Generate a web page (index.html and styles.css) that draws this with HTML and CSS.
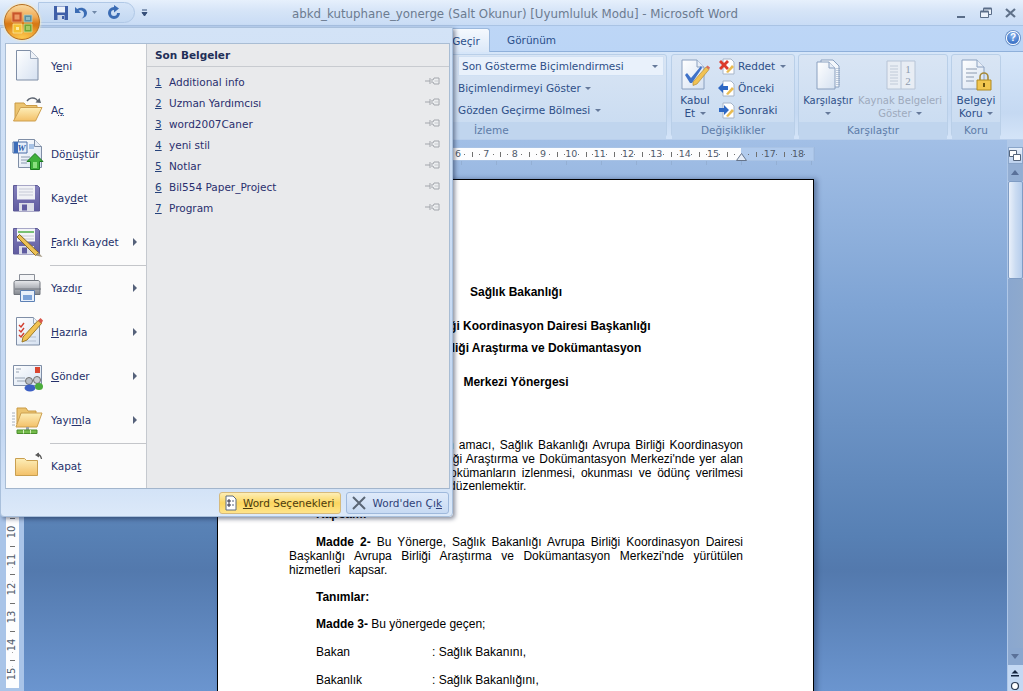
FILE: index.html
```html
<!DOCTYPE html>
<html lang="tr">
<head>
<meta charset="utf-8">
<title>abkd_kutuphane_yonerge - Microsoft Word</title>
<link rel="stylesheet" href="styles.css">
</head>
<body>
<svg class="defs" aria-hidden="true">
  <defs>
    <linearGradient id="paper" x1="0" y1="0" x2="1" y2="1"><stop offset="0" stop-color="#fff"/><stop offset="1" stop-color="#d5e1f1"/></linearGradient>
    <linearGradient id="folder" x1="0" y1="0" x2="0" y2="1"><stop offset="0" stop-color="#fdeeb8"/><stop offset="1" stop-color="#f3c068"/></linearGradient>
    <linearGradient id="disk" x1="0" y1="0" x2="0" y2="1"><stop offset="0" stop-color="#8480bb"/><stop offset="1" stop-color="#5f5ba0"/></linearGradient>
    <linearGradient id="printer" x1="0" y1="0" x2="0" y2="1"><stop offset="0" stop-color="#e8e9ec"/><stop offset=".5" stop-color="#b3b6bc"/><stop offset="1" stop-color="#83878e"/></linearGradient>
    <symbol id="pin" viewBox="0 0 16 8"><path d="M1 4h5M6 1v6" stroke="#a3a6ac" fill="none"/><path d="M7 3h2l1-2h5v6h-5l-1-2H7" fill="#eceef0" stroke="#a3a6ac"/><path d="M10.500 4h4" stroke="#c8cace"/></symbol>
  </defs>
</svg>
<div class="window">
  <header class="titlebar">
    <div class="qat">
      <svg class="qi" width="16" height="16" viewBox="0 0 16 16"><path d="M1 1h14v14H1z" fill="#3f5fa8"/><path d="M4 1.500h8v6H4z" fill="#eef3fa"/><path d="M4.500 10h7v5h-7z" fill="#c9d6ea"/><path d="M9 11h2v3H9z" fill="#3f5fa8"/></svg>
      <svg class="qi" width="16" height="16" viewBox="0 0 16 16"><path d="M3 2v6h6L6.700 5.800C9 4.600 12 6 12 9c0 2-1 3.500-2.500 4.500C12.500 13 15 11 15 8c0-4.500-5.500-7-9.800-4z" fill="#3b6cb4"/></svg>
      <svg class="qa" width="7" height="5" viewBox="0 0 7 5"><path d="M1 1h5L3.500 4z" fill="#7088a8"/></svg>
      <svg class="qi qr" width="16" height="16" viewBox="0 0 16 16"><path d="M8 2a6 6 0 1 0 6 6h-3a3 3 0 1 1-3-3v2.500L13 3.500 8 0z" fill="#3b6cb4"/></svg>
    </div>
    <svg class="qc" width="7" height="8" viewBox="0 0 7 8"><path d="M1 1h5M1 3.500h5L3.500 7z" stroke="#37507a" fill="#37507a" stroke-width="1"/></svg>
    <div class="title">abkd_kutuphane_yonerge (Salt Okunur) [Uyumluluk Modu] - Microsoft Word</div>
    <div class="winctl">
      <svg width="14" height="12" viewBox="0 0 14 12"><path d="M3 9h8v2H3z" fill="#5a6d88"/></svg>
      <svg width="14" height="12" viewBox="0 0 14 12"><path d="M4.500 1.500h8v6h-8z" fill="#eaf1fa" stroke="#5a6d88"/><path d="M4.500 1.500h8" stroke="#5a6d88" stroke-width="2"/><path d="M1.500 4.500h8v6h-8z" fill="#eaf1fa" stroke="#5a6d88"/><path d="M1.500 4.500h8" stroke="#5a6d88" stroke-width="2"/></svg>
      <svg width="14" height="12" viewBox="0 0 14 12"><path d="M2 2l9 8M11 2l-9 8" stroke="#5f7189" stroke-width="2.200"/></svg>
    </div>
  </header>

  <nav class="tabs">
    <div class="tab active">Gözden Geçir</div>
    <div class="tab">Görünüm</div>
    <div class="help">?</div>
  </nav>

  <section class="ribbon">
    <div class="group g-track">
      <div class="group-body track-body">
        <div class="select"><span>Son Gösterme Biçimlendirmesi</span><i class="caret"></i></div>
        <div class="rline">Biçimlendirmeyi Göster <i class="caret"></i></div>
        <div class="rline">Gözden Geçirme Bölmesi <i class="caret"></i></div>
      </div>
      <div class="group-label track-label">İzleme</div>
    </div>
    <div class="group g-changes">
      <div class="group-body changes-body">
        <div class="big big-accept">
          <svg width="32" height="32" viewBox="0 0 32 32"><path d="M3 1h15l7 7v22H3z" fill="url(#paper)" stroke="#8aa0bf"/><path d="M18 1v7h7" fill="#e8eef7" stroke="#8aa0bf"/><path d="M6 16l2-2 4 5L22 7l1 2-10 15h-2z" fill="#3f72c8"/><path d="M14 23L27 8l3 2.500L18 25l-4 1.500z" fill="#f1c253" stroke="#a7832d" stroke-width=".6"/><path d="M27 8l3 2.500 1-2-2.500-2z" fill="#d96c5a"/></svg>
          <span>Kabul<br>Et <i class="caret"></i></span>
        </div>
        <div class="stack">
          <div class="sitem"><svg width="17" height="17" viewBox="0 0 17 17"><path d="M5 1h8l3 3v12H5z" fill="#fff" stroke="#a7b5c8"/><path d="M1 4l2-2 3 3 3-3 2 2-3 3 3 3-2 2-3-3-3 3-2-2 3-3z" fill="#dc3b2b"/><path d="M8 14l6-7 2 2-6 6z" fill="#e9bc52"/></svg><span>Reddet <i class="caret"></i></span></div>
          <div class="sitem"><svg width="17" height="17" viewBox="0 0 17 17"><path d="M5 1h8l3 3v12H5z" fill="#fff" stroke="#a7b5c8"/><path d="M0 8l5-5v3h5v4H5v3z" fill="#2e68c4"/><path d="M8 14l6-7 2 2-6 6z" fill="#e9bc52"/></svg><span>Önceki</span></div>
          <div class="sitem"><svg width="17" height="17" viewBox="0 0 17 17"><path d="M5 1h8l3 3v12H5z" fill="#fff" stroke="#a7b5c8"/><path d="M11 8L6 3v3H1v4h5v3z" fill="#2e68c4"/><path d="M8 14l6-7 2 2-6 6z" fill="#e9bc52"/></svg><span>Sonraki</span></div>
        </div>
      </div>
      <div class="group-label">Değişiklikler</div>
    </div>
    <div class="group g-compare">
      <div class="group-body compare-body">
        <div class="big big-compare">
          <svg width="32" height="32" viewBox="0 0 32 32"><path d="M9 1h12l6 6v21H9z" fill="#f4f7fb" stroke="#8aa0bf"/><path d="M5 3h12l6 6v21H5z" fill="url(#paper)" stroke="#8aa0bf"/><path d="M17 3v6h6" fill="#e8eef7" stroke="#8aa0bf"/><path d="M25 9v17M27 9v17" stroke="#8aa0bf" stroke-dasharray="1 1"/></svg>
          <span>Karşılaştır<br><i class="caret"></i></span>
        </div>
        <div class="big big-source dim">
          <svg width="32" height="32" viewBox="0 0 32 32"><path d="M3 2h28v28H3z" fill="#e8edf4" stroke="#b7c4d6"/><path d="M17 2v28" stroke="#b7c4d6"/><path d="M6 7h8M6 10h8M6 13h8M6 16h8M6 19h8M6 22h8M6 25h8" stroke="#c0cad8"/><text x="24" y="14" class="numglyph">1</text><text x="24" y="26" class="numglyph">2</text></svg>
          <span>Kaynak Belgeleri<br>Göster <i class="caret"></i></span>
        </div>
      </div>
      <div class="group-label">Karşılaştır</div>
    </div>
    <div class="group g-protect">
      <div class="group-body protect-body">
        <div class="big big-protect">
          <svg width="32" height="32" viewBox="0 0 32 32"><path d="M2 1h15l7 7v22H2z" fill="url(#paper)" stroke="#8aa0bf"/><path d="M17 1v7h7" fill="#e8eef7" stroke="#8aa0bf"/><path d="M6 10h11M6 14h11M6 18h8M6 22h8" stroke="#8b9ab0"/><path d="M20 21v-3a4 4 0 0 1 8 0v3" fill="none" stroke="#a68a3a" stroke-width="1.600"/><path d="M17 21h14v10H17z" fill="#f2c64f" stroke="#b08a22"/><path d="M23 24h2v4h-2z" fill="#6b5310"/></svg>
          <span>Belgeyi<br>Koru <i class="caret"></i></span>
        </div>
      </div>
      <div class="group-label">Koru</div>
    </div>
  </section>

  <main class="workspace">
    <aside class="vruler">
      <div class="vcell"><span>1</span></div><div class="vcell"><span>2</span></div><div class="vcell"><span>3</span></div><div class="vcell"><span>4</span></div><div class="vcell"><span>5</span></div><div class="vcell"><span>6</span></div><div class="vcell"><span>7</span></div><div class="vcell"><span>8</span></div><div class="vcell"><span>9</span></div><div class="vcell"><span>10</span></div><div class="vcell"><span>11</span></div><div class="vcell"><span>12</span></div><div class="vcell"><span>13</span></div><div class="vcell"><span>14</span></div><div class="vcell"><span>15</span></div>
    </aside>
    <div class="docarea">
      <div class="hruler">
        <div class="hcell">6</div><div class="hcell">7</div><div class="hcell">8</div><div class="hcell">9</div><div class="hcell">10</div><div class="hcell">11</div><div class="hcell">12</div><div class="hcell">13</div><div class="hcell">14</div><div class="hcell">15</div><div class="hcell hmark"><svg width="11" height="8" viewBox="0 0 11 8"><path d="M5.500 .5l5 7H.5z" fill="#e6edf7" stroke="#66758c"/></svg></div><div class="hcell">17</div><div class="hcell">18</div>
      </div>
      <div class="hticks"></div>
      <article class="page">
        <p class="ctr m-first">Sağlık Bakanlığı</p>
        <p class="ctr m20">Avrupa Birliği Koordinasyon Dairesi Başkanlığı</p>
        <p class="ctr m8">Avrupa Birliği Araştırma ve Dokümantasyon</p>
        <p class="ctr m21">Merkezi Yönergesi</p>
        <p class="ind m21 hd">Amaç:</p>
        <p class="jl m14 ind"><b>Madde 1-</b> Bu yönergenin amacı, Sağlık Bakanlığı Avrupa Birliği Koordinasyon</p>
        <p class="jl">Dairesi Başkanlığı Avrupa Birliği Araştırma ve Dokümantasyon Merkezi'nde yer alan</p>
        <p class="jl">kitap, dergi, bilgi, belge ve dokümanların izlenmesi, okunması ve ödünç verilmesi</p>
        <p>işlemlerinin usul ve esaslarını düzenlemektir.</p>
        <p class="ind m14 hd">Kapsam:</p>
        <p class="jl ind m14"><b>Madde 2-</b> Bu Yönerge, Sağlık Bakanlığı Avrupa Birliği Koordinasyon Dairesi</p>
        <p class="jl">Başkanlığı Avrupa Birliği Araştırma ve Dokümantasyon Merkezi'nde yürütülen</p>
        <p class="wide">hizmetleri kapsar.</p>
        <p class="ind m14 hd">Tanımlar:</p>
        <p class="ind m13"><b>Madde 3-</b> Bu yönergede geçen;</p>
        <p class="def m14"><span>Bakan</span><span>: Sağlık Bakanını,</span></p>
        <p class="def m14"><span>Bakanlık</span><span>: Sağlık Bakanlığını,</span></p>
      </article>
    </div>
    <aside class="scrollbar">
      <div class="sb-split"><svg width="14" height="13" viewBox="0 0 14 13"><path d="M1.500 1.500h7v6h-7z" fill="#fff" stroke="#55657c"/><path d="M5.500 5.500h7v6h-7z" fill="#fff" stroke="#55657c"/></svg></div>
      <div class="sb-arrow"><i class="tri-up"></i></div>
      <div class="sb-thumb"></div>
      <div class="sb-track"></div>
      <div class="sb-arrow sb-down"><i class="tri-down"></i></div>
      <div class="sb-nav">
        <svg width="10" height="8" viewBox="0 0 10 8"><path d="M5 0l3.500 3.500h-7zM1 5h8v1.500H1z" fill="#12233f"/></svg>
        <svg width="10" height="14" viewBox="0 0 10 14"><circle cx="5" cy="6" r="3.500" fill="#fff" stroke="#2b3a52" stroke-width="1.200"/></svg>
      </div>
    </aside>
  </main>
</div>

<button class="orb" aria-label="Office">
  <svg width="24" height="24" viewBox="0 0 24 24"><path d="M1 1h10v10H1z" fill="#c9552b" stroke="#eaa36a" stroke-width=".8"/><path d="M3.500 3.500h5v5h-5z" fill="#ec9a66"/><path d="M13 4h8v7h-8z" fill="#5b8f9e" stroke="#b7d0c4" stroke-width=".8"/><path d="M15 6h4v3h-4z" fill="#8fbcc4"/><path d="M2 13h9v9H2z" fill="#f4bf32" stroke="#fbe6a0" stroke-width=".8"/><path d="M5 16h3v3H5z" fill="#fdeaa0"/><path d="M13 13h8v8h-8z" fill="#72a436" stroke="#cfe39a" stroke-width=".8"/><path d="M15 15h4v4h-4z" fill="#a5cb64"/></svg>
</button>

<div class="menu">
  <div class="menu-top"></div>
  <div class="menu-panel">
    <ul class="cmds">
      <li class="cmd"><svg width="32" height="32" viewBox="0 0 32 32"><path d="M4.500.5h14l7.500 8v21.500H4.500z" fill="url(#paper)" stroke="#7f8ea6"/><path d="M18.500.5v8H26" fill="#eef2f8" stroke="#9aa8bc"/></svg><span>Y<u>e</u>ni</span></li>
      <li class="cmd"><svg width="32" height="32" viewBox="0 0 32 32"><path d="M15 7c2-3 6-4 9-2 1 .7 1.500 1.500 2 2.500" fill="none" stroke="#5c6470" stroke-width="1.400"/><path d="M23.500 8.500l5.500.5-1.500-5z" fill="#5c6470"/><path d="M3 25V9h9l2 2.500h11V15H9z" fill="#ecc470" stroke="#c99a45"/><path d="M8.500 13.500H30L23.500 27H1.500z" fill="url(#folder)" stroke="#cda050"/></svg><span>A<u>ç</u></span></li>
      <li class="cmd"><svg width="32" height="32" viewBox="0 0 32 32"><path d="M6.500 1.500h16l7 7v21h-23z" fill="url(#paper)" stroke="#7f8ea6"/><path d="M22.500 1.500v7h7" fill="#e9eef6" stroke="#7f8ea6"/><path d="M17 6h5v5h-5z" fill="#a8c3e6"/><path d="M1 4h14v11H1z" fill="#e6eef9" stroke="#4a6ea8"/><path d="M2 4h4v11H2z" fill="#3c6cb8"/><text x="9.500" y="13" class="wglyph">W</text><path d="M9 19h9M9 22h8M9 25h6" stroke="#8b9ab0"/><path d="M18.500 31.500v-8H15l8-8 8 8h-3.500v8z" fill="#3eb03b" stroke="#1b7a1f"/><path d="M21 24h4v6h-4z" fill="#8ae07f"/></svg><span>Dö<u>n</u>üştür</span></li>
      <li class="cmd"><svg width="32" height="32" viewBox="0 0 32 32"><path d="M1.500 3.500h24l2 2v23.500h-26z" fill="url(#disk)" stroke="#5d5a96"/><path d="M5 3.500h18v14H5z" fill="#f0f1f6"/><path d="M7 7h14M7 10h14M7 13h14" stroke="#c6c9d6"/><path d="M7 21h15v8H7z" fill="#dcdee8"/><path d="M10 22.500h5v6h-5z" fill="#5f5ba0"/></svg><span>Kay<u>d</u>et</span></li>
      <li class="cmd sub"><svg width="32" height="32" viewBox="0 0 32 32"><path d="M1.500 2.500h24l2 2v23.500h-26z" fill="url(#disk)" stroke="#5d5a96"/><path d="M5 2.500h18v13H5z" fill="#f3f4f8"/><path d="M6 6h16" stroke="#4fb04a" stroke-width="1.500"/><path d="M6 10h16M6 13h16" stroke="#c6c9d6"/><path d="M7 20h15v8H7z" fill="#dcdee8"/><path d="M10 21.500h5v6h-5z" fill="#5f5ba0"/><path d="M5 11l2.500-2.500 19 18-3 3z" fill="#edc155" stroke="#876a22"/><path d="M23.500 29.500l3-3 4 4.500z" fill="#a59a84"/></svg><span><u>F</u>arklı Kaydet</span></li>
      <li class="msep"></li>
      <li class="cmd sub"><svg width="32" height="32" viewBox="0 0 32 32"><path d="M7.500 2.500h15v9h-15z" fill="#f4f5f7" stroke="#8a8f98"/><path d="M2 10.500c0-1 1-2 2-2h22c1 0 2 1 2 2v12H2z" fill="url(#printer)" stroke="#70757d"/><path d="M3 17h26" stroke="#70757d"/><path d="M8.500 18.500h14v11h-14z" fill="#e8f0fb" stroke="#5c80b4"/><path d="M11 23h9v5h-9z" fill="#7ba2d8"/></svg><span>Yazdı<u>r</u></span></li>
      <li class="cmd sub"><svg width="32" height="32" viewBox="0 0 32 32"><path d="M4.500 1.500h17l6 6v21.500h-23z" fill="url(#paper)" stroke="#7f8ea6"/><path d="M21.500 1.500v6h6" fill="#eef2f8" stroke="#9aa8bc"/><path d="M7 9l2 2 3-4M7 14l2 2 3-4M7 19l2 2 3-4" fill="none" stroke="#d23f30" stroke-width="1.400"/><path d="M14 21h10M10 25h14" stroke="#b6c1d1"/><path d="M11 21L26 4.500l3.500 3L15 24l-5 2z" fill="#f1c253" stroke="#9c7a26"/><path d="M26 4.500l3.500 3 1.500-3-2.500-2.500z" fill="#d9584c"/></svg><span><u>H</u>azırla</span></li>
      <li class="cmd sub"><svg width="32" height="32" viewBox="0 0 32 32"><path d="M1.500 5.500h28v20h-28z" fill="url(#paper)" stroke="#7f8ea6"/><path d="M23 7h5v6h-5z" fill="#d9452f"/><path d="M4 9h5M4 12h3M3 18h10M5 21h8" stroke="#98a4b4"/><circle cx="17" cy="21" r="3.500" fill="#b9bec4" stroke="#6e6e6e"/><circle cx="25" cy="20" r="3.500" fill="#c9cdd2" stroke="#6e6e6e"/><ellipse cx="18" cy="28" rx="5.500" ry="3.500" fill="#3c5fc4"/><ellipse cx="27" cy="26.500" rx="4" ry="3.500" fill="#4bac3c"/></svg><span><u>G</u>önder</span></li>
      <li class="cmd sub"><svg width="32" height="32" viewBox="0 0 32 32"><path d="M0 9h3M0 12h3M0 15h3M0 18h3M0 21h3" stroke="#a8b0bc"/><path d="M5 20V4h9l2 3h8v4H9z" fill="#ecc470" stroke="#c99a45"/><path d="M9 9h21l-5 14H4z" fill="url(#folder)" stroke="#cda050"/><path d="M14 23h3v3h-3z" fill="#9aa0a8"/><path d="M5 26h20v3.500H5z" fill="#74bb4b" stroke="#4b8f2c"/><path d="M11.500 26v3.500M18.500 26v3.500" stroke="#d7efc4"/></svg><span>Yayı<u>m</u>la</span></li>
      <li class="msep"></li>
      <li class="cmd"><svg width="32" height="32" viewBox="0 0 32 32"><path d="M25 4c2.500 .5 4 2 4.500 5" fill="none" stroke="#5a5a5a" stroke-width="1.300"/><path d="M23 5l4-2.500 0 5z" fill="#5a5a5a"/><path d="M3.500 8.500h9l2 2h11v15h-22z" fill="url(#folder)" stroke="#c99f50"/></svg><span>Kapa<u>t</u></span></li>
    </ul>
    <section class="recent">
      <h2 class="recent-h">Son Belgeler</h2>
      <ol class="rlist">
        <li><u>1</u><span>Additional info</span><svg class="pin"><use href="#pin"/></svg></li>
        <li><u>2</u><span>Uzman Yardımcısı</span><svg class="pin"><use href="#pin"/></svg></li>
        <li><u>3</u><span>word2007Caner</span><svg class="pin"><use href="#pin"/></svg></li>
        <li><u>4</u><span>yeni stil</span><svg class="pin"><use href="#pin"/></svg></li>
        <li><u>5</u><span>Notlar</span><svg class="pin"><use href="#pin"/></svg></li>
        <li><u>6</u><span>Bil554 Paper_Project</span><svg class="pin"><use href="#pin"/></svg></li>
        <li><u>7</u><span>Program</span><svg class="pin"><use href="#pin"/></svg></li>
      </ol>
    </section>
  </div>
  <div class="menu-foot">
    <button class="fbtn hot"><svg width="14" height="16" viewBox="0 0 14 16"><path d="M2 1h7l3 3v11H2z" fill="#fff" stroke="#5a6a80"/><path d="M4 5h2v2H4zM4 9h2v2H4z" fill="none" stroke="#334"/><path d="M8 6h2M8 10h2" stroke="#55657c"/></svg><span><u>W</u>ord Seçenekleri</span></button>
    <button class="fbtn"><svg width="16" height="14" viewBox="0 0 16 14"><path d="M2 1l12 12M14 1L2 13" stroke="#5a6675" stroke-width="2"/></svg><span class="fquit">Word'den Çı<u>k</u></span></button>
  </div>
</div>
</body>
</html>
```

FILE: styles.css
```css
* { box-sizing: border-box; }
html, body { margin: 0; padding: 0; }
body {
  width: 1023px;
  height: 691px;
  overflow: hidden;
  position: relative;
  font: 10.5px/14px "DejaVu Sans", Tahoma, sans-serif;
  color: #2b4a80;
  background: #bfd5f0;
}
.defs { position: absolute; width: 0; height: 0; }
.window { display: flex; flex-direction: column; height: 691px; }
u { text-underline-offset: 1px; }

/* title bar */
.titlebar {
  height: 26px;
  flex: none;
  display: flex;
  align-items: center;
  background: linear-gradient(#e6f0fc, #d5e4f7 45%, #c9dcf5);
  border-bottom: 1px solid #a9c3e4;
}
.qat {
  margin-left: 38px;
  width: 97px;
  height: 21px;
  border-radius: 0 11px 11px 0;
  background: linear-gradient(#d6e5f8, #c3d8f2);
  border: 1px solid #b0c8e6;
  display: flex;
  align-items: center;
  padding-left: 14px;
  gap: 3px;
}
.qi { flex: none; }
.qa { margin: 0 2px 0 0; }
.qr { margin-left: 3px; }
.qc { margin-left: 6px; }
.title {
  margin-left: 144px;
  padding-top: 2px;
  font-size: 11.8px;
  color: #6c7b90;
  white-space: nowrap;
}
.winctl { margin-left: auto; margin-right: 5px; display: flex; gap: 11px; }

/* tabs */
.tabs {
  height: 26px;
  flex: none;
  display: flex;
  align-items: flex-end;
  padding-left: 412px;
  background: linear-gradient(#bdd6f6, #bbd5f6);
  border-bottom: 1px solid #8fb0da;
  position: relative;
}
.tab { height: 23px; padding: 5px 16px 0; color: #2a4f8a; font-size: 10.5px; }
.tab.active {
  width: 78px;
  padding: 5px 0 0 0;
  text-indent: -4px;
  white-space: nowrap;
  background: linear-gradient(#f5f9fe, #dbe8f8);
  border: 1px solid #9cb9dd;
  border-bottom: 0;
  border-radius: 3px 3px 0 0;
  margin-bottom: -1px;
  height: 24px;
}
.tab + .tab { margin-left: 1px; }
.help {
  position: absolute;
  right: 3px;
  top: 5px;
  width: 14px;
  height: 14px;
  border-radius: 50%;
  background: radial-gradient(circle at 50% 30%, #8bb8f0, #1f59b8);
  border: 1px solid #fff;
  box-shadow: 0 0 0 1px #6d93c8;
  color: #fff;
  font: bold 10px/12px "Liberation Sans", sans-serif;
  text-align: center;
}

/* ribbon */
.ribbon {
  height: 88px;
  flex: none;
  display: flex;
  padding: 2px 22px 2px 0;
  gap: 3px;
  background: linear-gradient(#d6e6f9, #c5d9f2 70%, #d4e4f8);
  border-bottom: 1px solid #b9cfec;
}
.group {
  display: flex;
  flex-direction: column;
  border-radius: 3px;
  background: linear-gradient(#d9e5f4, #c8dbf1);
  border: 1px solid #b9cfe8;
  color: #2d4f88;
}
.group-body { height: 67px; flex: none; }
.group-label {
  height: 17px;
  line-height: 17px;
  text-align: center;
  background: #c0d5ee;
  color: #5d7ca8;
  font-size: 10.500px;
}
.g-track { width: 667px; }
.track-body { padding: 1px 2px 0 457px; }
.track-label { text-align: left; padding-left: 473px; }
.g-changes { width: 124px; margin-left: 1px; }
.g-compare { width: 150px; }
.g-protect { width: 50px; }
.select {
  height: 20px;
  margin-bottom: 1px;
  background: #e9f1fb;
  border: 1px solid #d0e0f3;
  display: flex;
  align-items: center;
  justify-content: space-between;
  padding: 0 5px 0 3px;
  color: #2d4f88;
}
.rline { height: 22px; line-height: 22px; white-space: nowrap; }
.caret {
  display: inline-block;
  width: 0;
  height: 0;
  border: 3px solid transparent;
  border-top: 3px solid #65799a;
  border-bottom: 0;
  vertical-align: 2px;
  margin-left: 1px;
}
.changes-body, .compare-body, .protect-body { display: flex; }
.big {
  display: flex;
  flex-direction: column;
  align-items: center;
  padding-top: 4px;
  text-align: center;
  line-height: 13px;
  white-space: nowrap;
}
.big svg { flex: none; margin-bottom: 3px; }
.big-accept { width: 46px; }
.big-compare { width: 54px; margin-left: 2px; font-size: 10px; }
.big-source { width: 90px; font-size: 10px; }
.big-protect { width: 48px; }
.dim { color: #9eaabd; }
.stack { padding-top: 0; }
.sitem { height: 22px; display: flex; align-items: center; gap: 3px; white-space: nowrap; }
.numglyph { font: 11px "Liberation Serif", serif; fill: #8d9aae; text-anchor: middle; }
.wglyph { font: bold italic 9px "Liberation Serif", serif; fill: #2b5aa8; text-anchor: middle; }

/* workspace */
.workspace { flex: 1; min-height: 0; display: flex; }
.vruler {
  width: 24px;
  flex: none;
  padding: 122.7px 5px 0 6px;
  background: #a9c4e8;
  overflow: hidden;
}
.vcell {
  height: 28.35px;
  background:
    linear-gradient(#707070, #707070) center top / 5px 1px no-repeat,
    linear-gradient(#707070, #707070) center 25% / 1px 1px no-repeat,
    linear-gradient(#707070, #707070) center 75% / 1px 1px no-repeat,
    #fdfdfe;
  display: flex;
  align-items: center;
  justify-content: center;
  color: #4f5a6b;
  font-size: 10px;
}
.vcell span { display: block; transform: rotate(-90deg); white-space: nowrap; background: #fdfdfe; padding: 0 1px; line-height: 10px; }

.docarea {
  flex: 1;
  min-width: 0;
  padding: 7px 0 0 193px;
  background: linear-gradient(#a2bfe6, #7fa4d4 30%, #5780b4 72%, #5379ad 78%, #6b95cf 100%);
  overflow: hidden;
}
.hruler {
  width: 597px;
  height: 14px;
  margin-left: 1px;
  padding-left: 225.8px;
  display: flex;
  background: linear-gradient(90deg, #b1cbed 71px, #fdfdfe 71px, #fdfdfe 523px, #b1cbed 523px);
  border-right: 1px solid #9cb8de;
  box-shadow: inset 0 0 0 1px #a9c3e5;
}
.hcell {
  width: 28.35px;
  flex: none;
  text-align: center;
  color: #4f5a6b;
  font-size: 9.5px;
  line-height: 14px;
  position: relative;
  background:
    linear-gradient(#707070, #707070) left center / 1px 5px no-repeat,
    linear-gradient(#707070, #707070) 25% center / 1px 1px no-repeat,
    linear-gradient(#707070, #707070) 75% center / 1px 1px no-repeat;
}
.hmark svg { position: absolute; left: 9px; top: 6px; }
.hticks {
  width: 597px;
  height: 4px;
  background: repeating-linear-gradient(90deg, transparent 0, transparent 34px, #8aa3c4 34px, #8aa3c4 35px);
  opacity: .5;
}
.page {
  width: 597px;
  height: 520px;
  margin-top: 14px;
  padding: 0 70px 0 71px;
  background: #fff;
  border: 1px solid #000;
  border-bottom: 0;
  box-shadow: 3px 0 5px rgba(30, 50, 90, .45);
  color: #000;
  font: 12px/13.8px "Liberation Sans", Arial, sans-serif;
}
.page p { margin: 0; white-space: nowrap; }
.ctr { text-align: center; font-weight: bold; }
.m-first { padding-top: 106px; }
.m20 { margin-top: 20px !important; }
.m21 { margin-top: 21px !important; }
.m8 { margin-top: 8px !important; }
.m14 { margin-top: 14px !important; }
.m13 { margin-top: 13px !important; }
.ind { text-indent: 27px; }
.hd { font-weight: bold; }
.jl { text-align: justify; text-align-last: justify; white-space: normal !important; }
.wide { word-spacing: 5px; }
.def { display: flex; padding-left: 27px; text-indent: 0; }
.def span:first-child { width: 116px; }

/* scrollbar */
.scrollbar {
  width: 16px;
  flex: none;
  display: flex;
  flex-direction: column;
  align-items: center;
  background: #b0c8e8;
}
.sb-split {
  margin-top: 7px;
  height: 17px;
  width: 15px;
  background: linear-gradient(#e5eefa, #bcd1ee);
  border: 1px solid #8aa5c9;
  display: flex;
  align-items: center;
  justify-content: center;
}
.sb-split svg { flex: none; margin: 0 -2px; }
.sb-arrow {
  height: 17px;
  width: 15px;
  display: flex;
  align-items: center;
  justify-content: center;
  background: #93aed3;
}
.sb-down { height: 17px; background: #8aa7cf; }
.tri-up { width: 0; height: 0; border: 4px solid transparent; border-top: 0; border-bottom: 5px solid #5a7199; }
.tri-down { width: 0; height: 0; border: 4px solid transparent; border-bottom: 0; border-top: 5px solid #5a7199; }
.sb-thumb {
  height: 98px;
  width: 15px;
  background: linear-gradient(90deg, #e9f0fa, #cbdcf2 50%, #b6cdec);
  border: 1px solid #7f9cc4;
  border-radius: 2px;
}
.sb-track { flex: 1; width: 15px; background: linear-gradient(90deg, #8aa7cf, #8ea9cd); }
.sb-nav {
  height: 26px;
  flex: none;
  width: 15px;
  padding-top: 5px;
  background: #c3d8f3;
  display: flex;
  flex-direction: column;
  align-items: center;
  gap: 2px;
  overflow: hidden;
}
.sb-nav svg { flex: none; }

/* office button */
.orb {
  position: absolute;
  left: 4px;
  top: 4px;
  width: 36px;
  height: 36px;
  padding: 0;
  border-radius: 50%;
  border: 1px solid #b86f1e;
  background:
    radial-gradient(ellipse 70% 40% at 50% 95%, #fcc64c, rgba(252, 198, 76, 0) 100%),
    linear-gradient(#f8d9a0, #f1ab55 35%, #d87915 55%, #e8921f);
  box-shadow: 0 0 2px 1px rgba(250, 235, 190, .8);
  z-index: 3;
  display: flex;
  align-items: center;
  justify-content: center;
}
.orb svg { flex: none; margin: 1px 0 0 1px; }

/* office menu */
.menu {
  position: absolute;
  left: 0;
  top: 27px;
  width: 453px;
  height: 490px;
  padding: 0 2px 0 4px;
  display: flex;
  flex-direction: column;
  background: linear-gradient(#d3e3f7, #c3d7f2 82%, #cfe0f6 92%, #dce9f9);
  border: 1px solid #a9c0dc;
  border-radius: 0 0 4px 4px;
  box-shadow: 2px 2px 4px rgba(20, 30, 60, .5);
  z-index: 2;
}
.menu-top { height: 15px; flex: none; }
.menu-panel {
  height: 446px;
  flex: none;
  display: flex;
  background: #e9eaec;
  border: 1px solid #a9bdd4;
  border-bottom-color: #a2b5cc;
}
.cmds {
  width: 141px;
  flex: none;
  margin: 0;
  padding: 0;
  list-style: none;
  background: #fbfbfb;
  border-right: 1px solid #c5c9cf;
  color: #25316b;
}
.cmd {
  height: 44px;
  display: flex;
  align-items: center;
  padding-left: 6px;
  gap: 7px;
  position: relative;
  white-space: nowrap;
}
.cmd svg { flex: none; }
.sub::after {
  content: "";
  position: absolute;
  left: 127px;
  top: 18px;
  border: 4px solid transparent;
  border-left: 4px solid #55617a;
  border-right: 0;
}
.msep { height: 2px; margin-left: 44px; border-bottom: 1px solid #c4c6ca; }
.recent { flex: 1; min-width: 0; }
.recent-h {
  margin: 0;
  height: 23px;
  padding: 4px 0 0 8px;
  font-size: 10.5px;
  font-weight: bold;
  line-height: 14px;
  color: #1f2f58;
  border-bottom: 1px solid #c8cbd0;
}
.rlist { margin: 0; padding: 4px 0 0 8px; list-style: none; color: #2a2f6e; }
.rlist li {
  height: 21px;
  display: flex;
  align-items: center;
  padding-right: 9px;
}
.rlist li u { width: 14px; flex: none; color: #26427a; }
.pin { width: 16px; height: 8px; flex: none; margin: -2px 0 0 auto; }
.menu-foot { flex: 1; display: flex; justify-content: flex-end; align-items: center; gap: 5px; padding: 0 1px 0 0; }
.fbtn {
  height: 22px;
  display: flex;
  align-items: center;
  gap: 5px;
  padding: 0 6px 0 4px;
  font: inherit;
  color: #2f3f78;
  border: 1px solid #9fb9dc;
  border-radius: 3px;
  background: linear-gradient(#dfeafa, #c7daf3);
  white-space: nowrap;
}
.fbtn.hot {
  color: #4a3a10;
  border-color: #d6ba7c;
  background: linear-gradient(#fdeeb6, #fbd65f 50%, #ffe48a);
}
.fbtn svg { flex: none; }
.fquit { letter-spacing: .02px; }
```
